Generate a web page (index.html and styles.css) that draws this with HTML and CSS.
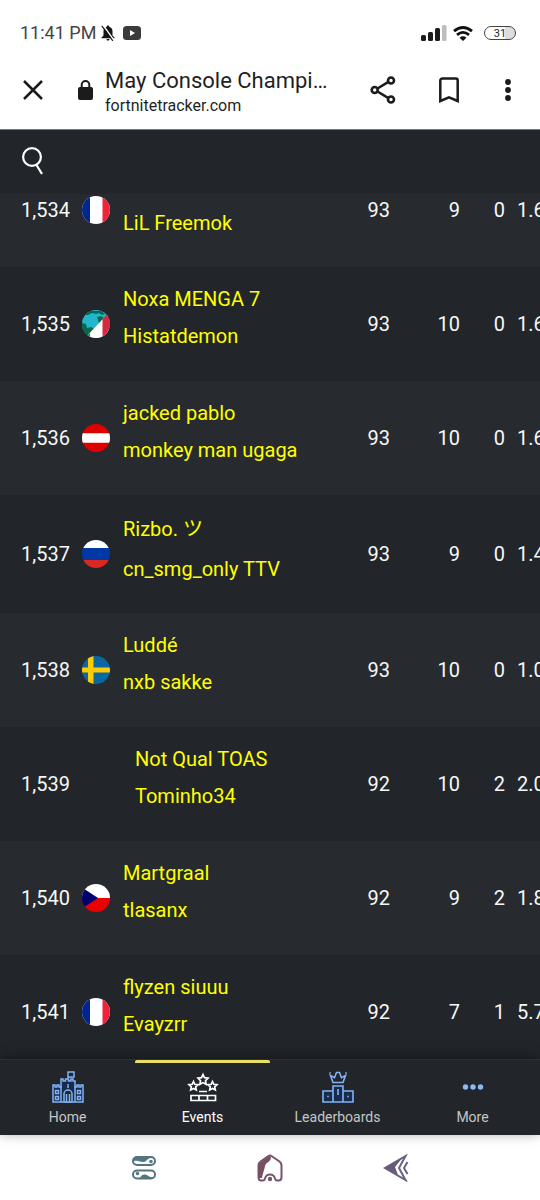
FILE: index.html
```html
<!DOCTYPE html>
<html lang="en">
<head>
<meta charset="utf-8">
<meta name="viewport" content="width=device-width, initial-scale=1">
<title>May Console Champions – fortnitetracker.com</title>
<link rel="stylesheet" href="styles.css">
</head>
<body>
<div class="status">
  <span class="clock">11:41 PM</span>
  <svg class="bell" width="14" height="16" viewBox="0 0 14 16"><path d="M7 0.500c.8 0 1.200.5 1.200 1.200 2.200.6 3.300 2.300 3.300 4.600V10.500l2 2v.7H.5v-.7l2-2V6.300c0-2.300 1.200-4 3.300-4.600C5.800 1 6.200.5 7 .5zM5.500 14h3c0 1-.6 1.600-1.500 1.600S5.500 15 5.500 14z" fill="#151515"/><path d="M2 0l11 15.500" stroke="#fff" stroke-width="1.500"/><path d="M.8.8l11 15" stroke="#151515" stroke-width="1.200"/></svg>
  <svg width="18" height="14" viewBox="0 0 18 14"><rect width="18" height="14" rx="3.500" fill="#3b3b3b"/><path d="M7 4l5 3-5 3z" fill="#fff"/></svg>
  <span class="space"></span>
  <svg class="signal" width="26" height="17" viewBox="0 0 26 17"><g fill="#1c1c1c"><rect x="0" y="10" width="5" height="6" rx="1.500"/><rect x="7" y="7" width="5" height="9" rx="1.500"/><rect x="14" y="3" width="5" height="13" rx="1.500"/></g><rect x="21" y="0" width="4.500" height="16" rx="1.500" fill="#bdbdbd"/></svg>
  <svg class="wifi" width="20" height="15" viewBox="0 0 20 15" fill="none" stroke="#111" stroke-width="2.800"><path d="M1 5.200Q10-2.200 19 5.200"/><path d="M4 8.900Q10 3.900 16 8.900"/><path d="M6.500 11.700Q10 8.900 13.500 11.700L10 15z" fill="#111" stroke="none"/></svg>
  <span class="battery">31</span>
</div>

<header class="browser">
  <button class="icon-btn" aria-label="Close"><svg width="20" height="20" viewBox="0 0 20 20"><path d="M1 1l18 18M19 1L1 19" stroke="#1b1b1b" stroke-width="2.500"/></svg></button>
  <svg class="lock" width="15" height="20" viewBox="0 0 15 20"><rect y="7" width="15" height="13" rx="2" fill="#1b1b1b"/><path d="M3.700 8V4.800a3.800 3.800 0 0 1 7.600 0V8" fill="none" stroke="#1b1b1b" stroke-width="2"/></svg>
  <div class="page-id">
    <div class="page-title">May Console Champi…</div>
    <div class="page-host">fortnitetracker.com</div>
  </div>
  <button class="icon-btn share" aria-label="Share"><svg width="26" height="28" viewBox="0 0 26 28" fill="none" stroke="#1b1b1b" stroke-width="2.600"><path d="M7.500 12.500L18 6.200M7.500 15.500L18 21.800"/><circle cx="4.700" cy="14" r="3"/><circle cx="21" cy="4.500" r="3"/><circle cx="21" cy="23.500" r="3"/></svg></button>
  <button class="icon-btn mark" aria-label="Bookmark"><svg width="20" height="26" viewBox="0 0 20 26"><path d="M1.300 3.500a2 2 0 0 1 2-2h13.400a2 2 0 0 1 2 2v20.500L10 20.300l-8.700 3.700z" fill="none" stroke="#1b1b1b" stroke-width="2.500"/></svg></button>
  <button class="icon-btn" aria-label="Menu"><svg width="6" height="22" viewBox="0 0 6 22" fill="#1b1b1b"><circle cx="3" cy="3" r="2.900"/><circle cx="3" cy="11" r="2.900"/><circle cx="3" cy="19" r="2.900"/></svg></button>
</header>

<div class="search-bar">
  <button class="icon-btn" aria-label="Search"><svg width="22" height="28" viewBox="0 0 22 28" fill="none" stroke="#fff" stroke-width="2.200"><circle cx="10" cy="10" r="8.900"/><path d="M14.500 18l5.500 9"/></svg></button>
</div>

<main class="board">
  <table class="ranks">
    <colgroup><col class="c-rank"><col class="c-flag"><col><col class="c-points"><col class="c-matches"><col class="c-wins"><col class="c-avg"></colgroup>
    <tbody>
      <tr class="clipped"><td class="rank">1,534</td><td><svg class="flag" viewBox="0 0 28 28"><path fill="#fff" d="M0 0h28v28H0z"/><path fill="#00278d" d="M0 0h8v28H0z"/><path fill="#f1233a" d="M20.500 0H28v28h-7.500z"/></svg></td><td class="team"><a href="#">LiL Freemok</a></td><td>93</td><td>9</td><td>0</td><td class="avg">1.6</td></tr>
      <tr><td class="rank">1,535</td><td><svg class="flag" viewBox="0 0 28 28"><path fill="#22b5cb" d="M0 0h28v28H0z"/><path fill="#08684b" d="M2 6L7 1h12l4 3-3 1-3-2-3 1-4-1-4 2-3 0zM15 7l4-1 3 2 3-3 3 5-8 5-3-2-1-3zM0 13l4 1 1 4 4-1 3 2-2 5-5 3-5-2z"/><path fill="#fff" d="M25.500 4L28 28H3z"/><path fill="#128256" d="M3 28l5-5v5z"/><path fill="#d52b40" d="M20.500 9L28 1v27h-7.500z"/></svg></td><td class="team"><a href="#">Noxa MENGA 7</a><a href="#">Histatdemon</a></td><td>93</td><td>10</td><td>0</td><td class="avg">1.6</td></tr>
      <tr><td class="rank">1,536</td><td><svg class="flag" viewBox="0 0 28 28"><path fill="#df0000" d="M0 0h28v28H0z"/><path fill="#fff" d="M0 9.300h28v9.400H0z"/></svg></td><td class="team"><a href="#">jacked pablo</a><a href="#">monkey man ugaga</a></td><td>93</td><td>10</td><td>0</td><td class="avg">1.6</td></tr>
      <tr><td class="rank">1,537</td><td><svg class="flag" viewBox="0 0 28 28"><path fill="#fff" d="M0 0h28v8H0z"/><path fill="#0038a5" d="M0 8h28v12H0z"/><path fill="#da2922" d="M0 20h28v8H0z"/></svg></td><td class="team"><a class="tall" href="#">Rizbo. ツ</a><a href="#">cn_smg_only TTV</a></td><td>93</td><td>9</td><td>0</td><td class="avg">1.4</td></tr>
      <tr><td class="rank">1,538</td><td><svg class="flag" viewBox="0 0 28 28"><path fill="#0968a2" d="M0 0h28v28H0z"/><path fill="#fdcc05" d="M6 0h5.500v28H6zM0 11.500h28v5H0z"/></svg></td><td class="team"><a href="#">Luddé</a><a href="#">nxb sakke</a></td><td>93</td><td>10</td><td>0</td><td class="avg">1.0</td></tr>
      <tr><td class="rank">1,539</td><td></td><td class="team indented"><a href="#">Not Qual TOAS</a><a href="#">Tominho34</a></td><td>92</td><td>10</td><td>2</td><td class="avg">2.0</td></tr>
      <tr><td class="rank">1,540</td><td><svg class="flag" viewBox="0 0 28 28"><path fill="#fff" d="M0 0h28v14H0z"/><path fill="#ea0000" d="M0 14h28v14H0z"/><path fill="#00006f" d="M0 3.500L16 14 0 24.500z"/></svg></td><td class="team"><a href="#">Martgraal</a><a href="#">tlasanx</a></td><td>92</td><td>9</td><td>2</td><td class="avg">1.8</td></tr>
      <tr><td class="rank">1,541</td><td><svg class="flag" viewBox="0 0 28 28"><path fill="#fff" d="M0 0h28v28H0z"/><path fill="#00278d" d="M0 0h8v28H0z"/><path fill="#f1233a" d="M20.500 0H28v28h-7.500z"/></svg></td><td class="team"><a href="#">flyzen siuuu</a><a href="#">Evayzrr</a></td><td>92</td><td>7</td><td>1</td><td class="avg">5.7</td></tr>
    </tbody>
  </table>
</main>

<nav class="tabs">
  <a class="tab" href="#"><svg width="32" height="32" viewBox="0 0 32 32" fill="none" stroke="#83b3f6" stroke-width="1.500"><path fill="#172b4a" d="M1 31V14h2v2h2v-2h2v2h2V8h2v2h2.500V8h3v2H19V8h2v2h2v6h2v-2h2v2h2v-2h2v17z"/><path d="M9 15v16M23 15v16M16 8V1h6v5h-6"/><path fill="#22262a" d="M12 31v-8a4 4 0 0 1 8 0v8z"/><path d="M14.500 31v-8M17.500 31v-8M16 13v4M3.500 19.500h3v3h-3zM3.500 25.500h3v3h-3zM25.500 19.500h3v3h-3zM25.500 25.500h3v3h-3z"/></svg><span>Home</span></a>
  <a class="tab active" href="#"><svg width="32" height="32" viewBox="0 0 32 32" fill="none" stroke="#fff" stroke-width="1.700"><path d="M16 3.500l1.500 3.200 3.500.5-2.500 2.500.6 3.600L16 11.600l-3.100 1.700.6-3.600L11 7.200l3.500-.5zM6.500 10.500l1.300 2.800 3.200.4-2.300 2.200.6 3.100-2.800-1.500L3.700 19l.6-3.100L2 13.700l3.200-.4zM25.500 10.500l1.300 2.800 3.200.4-2.300 2.200.6 3.100-2.800-1.500-2.800 1.500.6-3.100-2.300-2.200 3.200-.4zM12 20.500h8M4 24.500h24.500v5H4zM12 24.500v5M20.500 24.500v5"/></svg><span>Events</span></a>
  <a class="tab" href="#"><svg width="32" height="32" viewBox="0 0 32 32" fill="none" stroke="#83b3f6" stroke-width="1.600"><path fill="#172b4a" d="M1 20h10v11H1zM21 20h10v11H21zM11 15h10v16H11z"/><path d="M16 18v6M11 11.500h10L23.500 4.500l-4 2.200L17.500 1.500h-3l-2 5.200-4-2.200z"/><path d="M5.200 25.500h1.600M25.200 25.500h1.600M7.200 2h1.600M23.200 2h1.600"/></svg><span>Leaderboards</span></a>
  <a class="tab" href="#"><svg width="32" height="32" viewBox="0 0 32 32" fill="#8db9f7"><circle cx="8.500" cy="16" r="2.700"/><circle cx="16" cy="16" r="2.700"/><circle cx="23.500" cy="16" r="2.700"/></svg><span>More</span></a>
</nav>

<footer class="system">
  <button class="icon-btn" aria-label="Recent apps"><svg width="26" height="26" viewBox="0 0 26 26" fill="none" stroke="#537580" stroke-width="2"><rect x="2" y="2" width="22" height="8" rx="4"/><rect x="2" y="15.500" width="22" height="8" rx="4"/><path fill="#537580" stroke="none" d="M3 3h17c-4 0-4 4-8 4-3 0-4-2-9-1zM8 23c2 0 2-3.500 5.500-3.500S18 23 22 22v1.500H8z"/><circle cx="20" cy="6.500" r=".8"/><circle cx="6.500" cy="18.500" r=".8"/></svg></button>
  <button class="icon-btn" aria-label="Home screen"><svg width="26" height="28" viewBox="0 0 26 28" fill="none" stroke="#74546e" stroke-width="2" stroke-linejoin="round"><path d="M4 26.500Q1.500 26.500 1.500 23V11.500Q1.500 9 3.500 7.500L11.500 2Q13 1 14.500 2L22.500 7.500Q24.500 9 24.500 11.500V23q0 3.500-3 3.500h-1.500q-1.500 0-2-2c-.7-2.700-2.500-4-5-4s-4.300 1.300-5 4q-.5 2-2 2z"/><path fill="#7c4c60" stroke="none" d="M1.500 24V10L12 2l2 1c0 5-5 5-6 9-1 5-2 6-3 12z"/><circle cx="13" cy="25" r="2.200" fill="#74546e" stroke="none"/></svg></button>
  <button class="icon-btn" aria-label="Back"><svg width="26" height="28" viewBox="0 0 26 28" fill="none" stroke="#6b6180" stroke-width="2"><path d="M22.500 2L2 14l20.500 12-6.500-12z"/><path fill="#665a7a" stroke="none" d="M2 14L20 3l-8 10 3 8z"/><path d="M24.500 8l-3.500 6 3.500 6"/></svg></button>
</footer>
</body>
</html>
```
FILE: styles.css
```css
* { box-sizing: border-box; }

body {
  margin: 0;
  height: 100vh;
  display: flex;
  flex-direction: column;
  overflow: hidden;
  background: #fff;
  color: #1f1f1f;
  font-family: Roboto, "Noto Sans CJK JP", sans-serif;
}

svg { display: block; flex: none; }
a { text-decoration: none; }

.icon-btn {
  display: block;
  flex: none;
  padding: 0;
  border: 0;
  background: none;
}

/* Device status line */
.status {
  display: flex;
  align-items: center;
  padding: 21px 24px 0 20px;
  height: 45px;
}
.clock { font-size: 18px; line-height: 24px; color: #444; }
.bell { margin: 0 8px 0 5px; }
.space { flex: 1; }
.wifi { margin: 0 11px 0 6px; }
.battery {
  width: 32px;
  height: 14px;
  border: 1px solid #444;
  border-radius: 7px;
  background: linear-gradient(90deg, #fff 66%, #ddd 66%);
  font-size: 11px;
  line-height: 13px;
  text-align: center;
}

/* Browser toolbar */
.browser {
  display: flex;
  align-items: center;
  padding: 5px 29px 0 23px;
  height: 85px;
  border-bottom: 1px solid #77777f;
}
.lock { margin: 0 12px 0 35px; }
.page-id { flex: 1; min-width: 0; padding-top: 4px; white-space: nowrap; }
.page-title { font-size: 22px; line-height: 28px; }
.page-host { font-size: 16px; line-height: 22px; }
.share { margin-right: 43px; }
.mark { margin-right: 46px; }

.search-bar {
  flex: none;
  padding: 17px 22px;
  height: 64px;
  background: #22262a;
}

/* Standings */
.board { flex: 1; min-height: 0; overflow: hidden; background: #22262a; }
.ranks {
  width: 100%;
  margin-top: -41px;
  table-layout: fixed;
  border-collapse: collapse;
  color: #f7f7f7;
  font-size: 20px;
}
.ranks tr:nth-child(odd) { background: #272b2f; }
.ranks td { height: 114px; padding: 0; text-align: right; white-space: nowrap; }
.ranks .rank { padding-left: 21px; text-align: left; }
.ranks .avg { padding-left: 12px; text-align: left; }
.c-rank { width: 82px; }
.c-flag { width: 41px; }
.c-points { width: 80px; }
.c-matches { width: 70px; }
.c-wins { width: 45px; }
.c-avg { width: 35px; }
.flag { width: 28px; height: 28px; border-radius: 50%; }
.ranks .team { padding: 13px 0 25px; text-align: left; }
.ranks .indented { padding-left: 12px; }
.clipped .team { vertical-align: bottom; }
.team a { display: block; line-height: 37px; color: #ff0; }
.team .tall { line-height: 43px; }

/* Site tabs */
.tabs {
  position: relative;
  display: flex;
  border-top: 1px solid #2d3135;
  background: #22262a;
  box-shadow: 0 -2px 12px rgba(0, 0, 0, 0.4);
}
.tab {
  flex: 1;
  display: flex;
  flex-direction: column;
  align-items: center;
  gap: 4px;
  padding: 8px 0;
  border-top: 3px solid transparent;
  color: #c4c6c8;
  font-size: 14px;
  line-height: 20px;
}
.active { border-color: #e9df63; border-radius: 2px 2px 0 0; color: #fff; }

/* Device navigation */
.system {
  display: flex;
  justify-content: space-between;
  align-items: center;
  padding: 0 131px;
  height: 65px;
}
```
